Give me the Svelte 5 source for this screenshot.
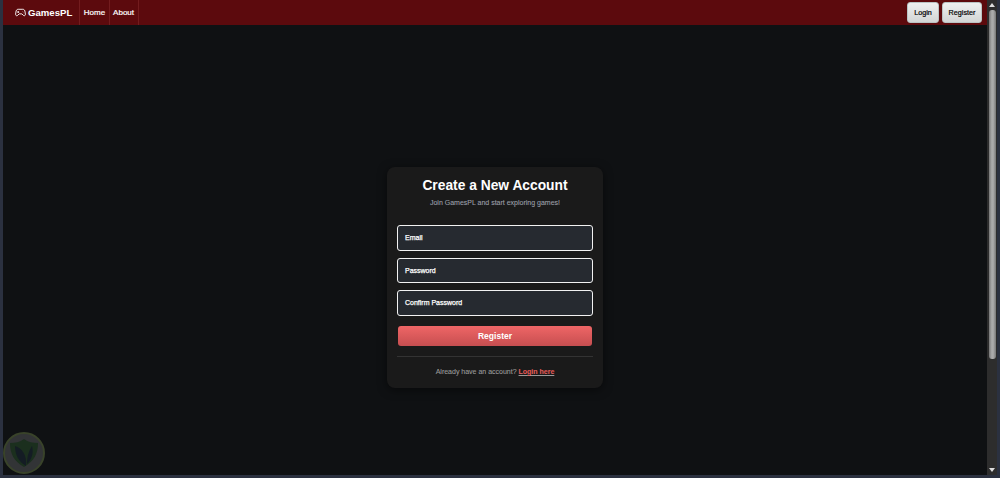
<script lang="ts">
  const fields = ["Email", "Password", "Confirm Password"];
</script>

<div class="window">
  <div class="page">
    <nav class="navbar">
      <a class="brand" href="#top">
        <svg viewBox="0 0 24 18" width="11" height="9" fill="none" stroke="currentColor" stroke-width="2">
          <path d="M7 2h10c3 0 4.500 2 5 6l.7 5c.2 3-3 4-4.700 2l-3-3H9l-3 3c-1.700 2-4.900 1-4.700-2l.7-5c.5-4 2-6 5-6z" />
          <path d="M5 8h4M7 6v4M15.500 7h.5M18 9.500h.5" />
        </svg>
        GamesPL
      </a>
      <a class="link" href="#top">Home</a>
      <a class="link" href="#top">About</a>
      <div class="auth">
        <button class="login">Login</button>
        <button class="register">Register</button>
      </div>
    </nav>

    <main>
      <section class="card">
        <h1>Create a New Account</h1>
        <p class="sub">Join GamesPL and start exploring games!</p>
        <div class="fields">
          {#each fields as field}
            <div class="field">{field}</div>
          {/each}
        </div>
        <div class="submit">Register</div>
        <hr />
        <p class="foot">Already have an account? <a href="#top">Login here</a></p>
      </section>
    </main>
  </div>

  <div class="scrollbar">
    <span class="arrow up"></span>
    <span class="thumb"></span>
    <span class="arrow down"></span>
  </div>

  <div class="badge">
    <svg viewBox="0 0 42 42" width="42" height="42">
      <circle cx="21" cy="21" r="20" fill="#323436" stroke="#39432a" stroke-width="2" />
      <path d="M21 7c4 3 9 4 14 4 0 11-4 18-14 24-10-6-14-13-14-24 5 0 10-1 14-4z" fill="#1b2f1e" />
      <path d="M12 14c7 2 12 9 11 20-7-4-11-11-11-20z" fill="#141c24" />
      <path d="M29 14c2 8-1 14-5 18 0-6 1-12 5-18z" fill="#141c24" />
    </svg>
  </div>
</div>

<style>
  :global(body) {
    margin: 0;
    background: #0f1113;
    font-family: "Liberation Sans", Arial, sans-serif;
    overflow: hidden;
  }
  .window {
    height: 478px;
    display: flex;
    position: relative;
    overflow: hidden;
    background: #2b3140;
    padding-left: 3px;
    box-sizing: border-box;
  }
  .page {
    flex: 1;
    min-width: 0;
    height: 475px;
    display: flex;
    flex-direction: column;
    background: #0f1113;
  }
  .navbar {
    height: 25px;
    flex: none;
    display: flex;
    align-items: center;
    background: #5c0a0d;
    padding-left: 12px;
    box-sizing: border-box;
  }
  .brand {
    display: flex;
    align-items: center;
    gap: 2px;
    color: #fff;
    font-size: 9.600px;
    font-weight: 700;
    text-decoration: none;
    padding-right: 7px;
    height: 100%;
    border-right: 1px solid #731c1e;
  }
  .link {
    display: flex;
    align-items: center;
    height: 100%;
    padding: 0 3.500px;
    color: #fff;
    font-size: 8px;
    -webkit-text-stroke: 0.2px #fff;
    text-decoration: none;
    border-right: 1px solid #731c1e;
  }
  .auth {
    margin-left: auto;
    display: flex;
    gap: 3px;
    padding-right: 5px;
  }
  .auth button {
    height: 21px;
    padding: 0;
    font: 400 7.200px "Liberation Sans", Arial, sans-serif;
    -webkit-text-stroke: 0.2px #000;
    color: #000;
    background: linear-gradient(180deg, #eef0f0, #d2d5d5);
    border: 1px solid #b9c4c4;
    border-radius: 3px;
  }
  .auth .login {
    width: 32px;
  }
  .auth .register {
    width: 40px;
  }
  main {
    flex: 1;
    display: flex;
    justify-content: center;
    padding-top: 142px;
  }
  .card {
    width: 216px;
    height: 221px;
    box-sizing: border-box;
    padding: 10px 10px 0;
    background: #1a1a1a;
    border-radius: 8px;
    box-shadow: 0 2px 10px rgba(0, 0, 0, 0.5);
    text-align: center;
  }
  h1 {
    margin: 0;
    font-size: 13.800px;
    line-height: 17px;
    font-weight: 700;
    color: #fff;
  }
  .sub {
    margin: 4px 0 0;
    font-size: 7px;
    line-height: 9px;
    color: #9a9fa8;
    -webkit-text-stroke: 0.1px #9a9fa8;
  }
  .fields {
    margin-top: 18px;
    display: flex;
    flex-direction: column;
    gap: 7px;
  }
  .field {
    height: 25.500px;
    box-sizing: border-box;
    padding-left: 7px;
    display: flex;
    align-items: center;
    font-size: 7px;
    color: #fff;
    -webkit-text-stroke: 0.25px #fff;
    background: #262a30;
    border: 1px solid #f2f2f2;
    border-radius: 3px;
  }
  .submit {
    margin: 10.500px 1px 0;
    height: 20px;
    line-height: 20px;
    border-radius: 3px;
    font-size: 8.500px;
    font-weight: 700;
    color: #fff;
    background: linear-gradient(180deg, #ef6666, #c64e50);
  }
  hr {
    margin: 10px 0 0;
    border: 0;
    height: 1px;
    background: #333;
  }
  .foot {
    margin: 10px 0 0;
    font-size: 7px;
    line-height: 9px;
    color: #999;
    -webkit-text-stroke: 0.1px #999;
  }
  .foot a {
    color: #f0524f;
    font-weight: 700;
  }
  .scrollbar {
    width: 10px;
    margin: 0 3px 0 0;
    flex: none;
    background: #2d2d2d;
    display: flex;
    flex-direction: column;
    align-items: center;
    height: 475px;
  }
  .arrow {
    width: 0;
    height: 0;
    border-left: 3px solid transparent;
    border-right: 3px solid transparent;
    margin: 3px 0;
  }
  .arrow.up {
    border-bottom: 4px solid #ddd;
  }
  .arrow.down {
    border-top: 4px solid #ddd;
  }
  .thumb {
    flex: none;
    width: 7px;
    height: 349px;
    border-radius: 3px;
    background: linear-gradient(90deg, #777, #aaa 40%, #aaa 60%, #777);
    margin-bottom: auto;
  }
  .badge {
    position: absolute;
    left: 3px;
    bottom: 4px;
    width: 42px;
    height: 42px;
  }
</style>
